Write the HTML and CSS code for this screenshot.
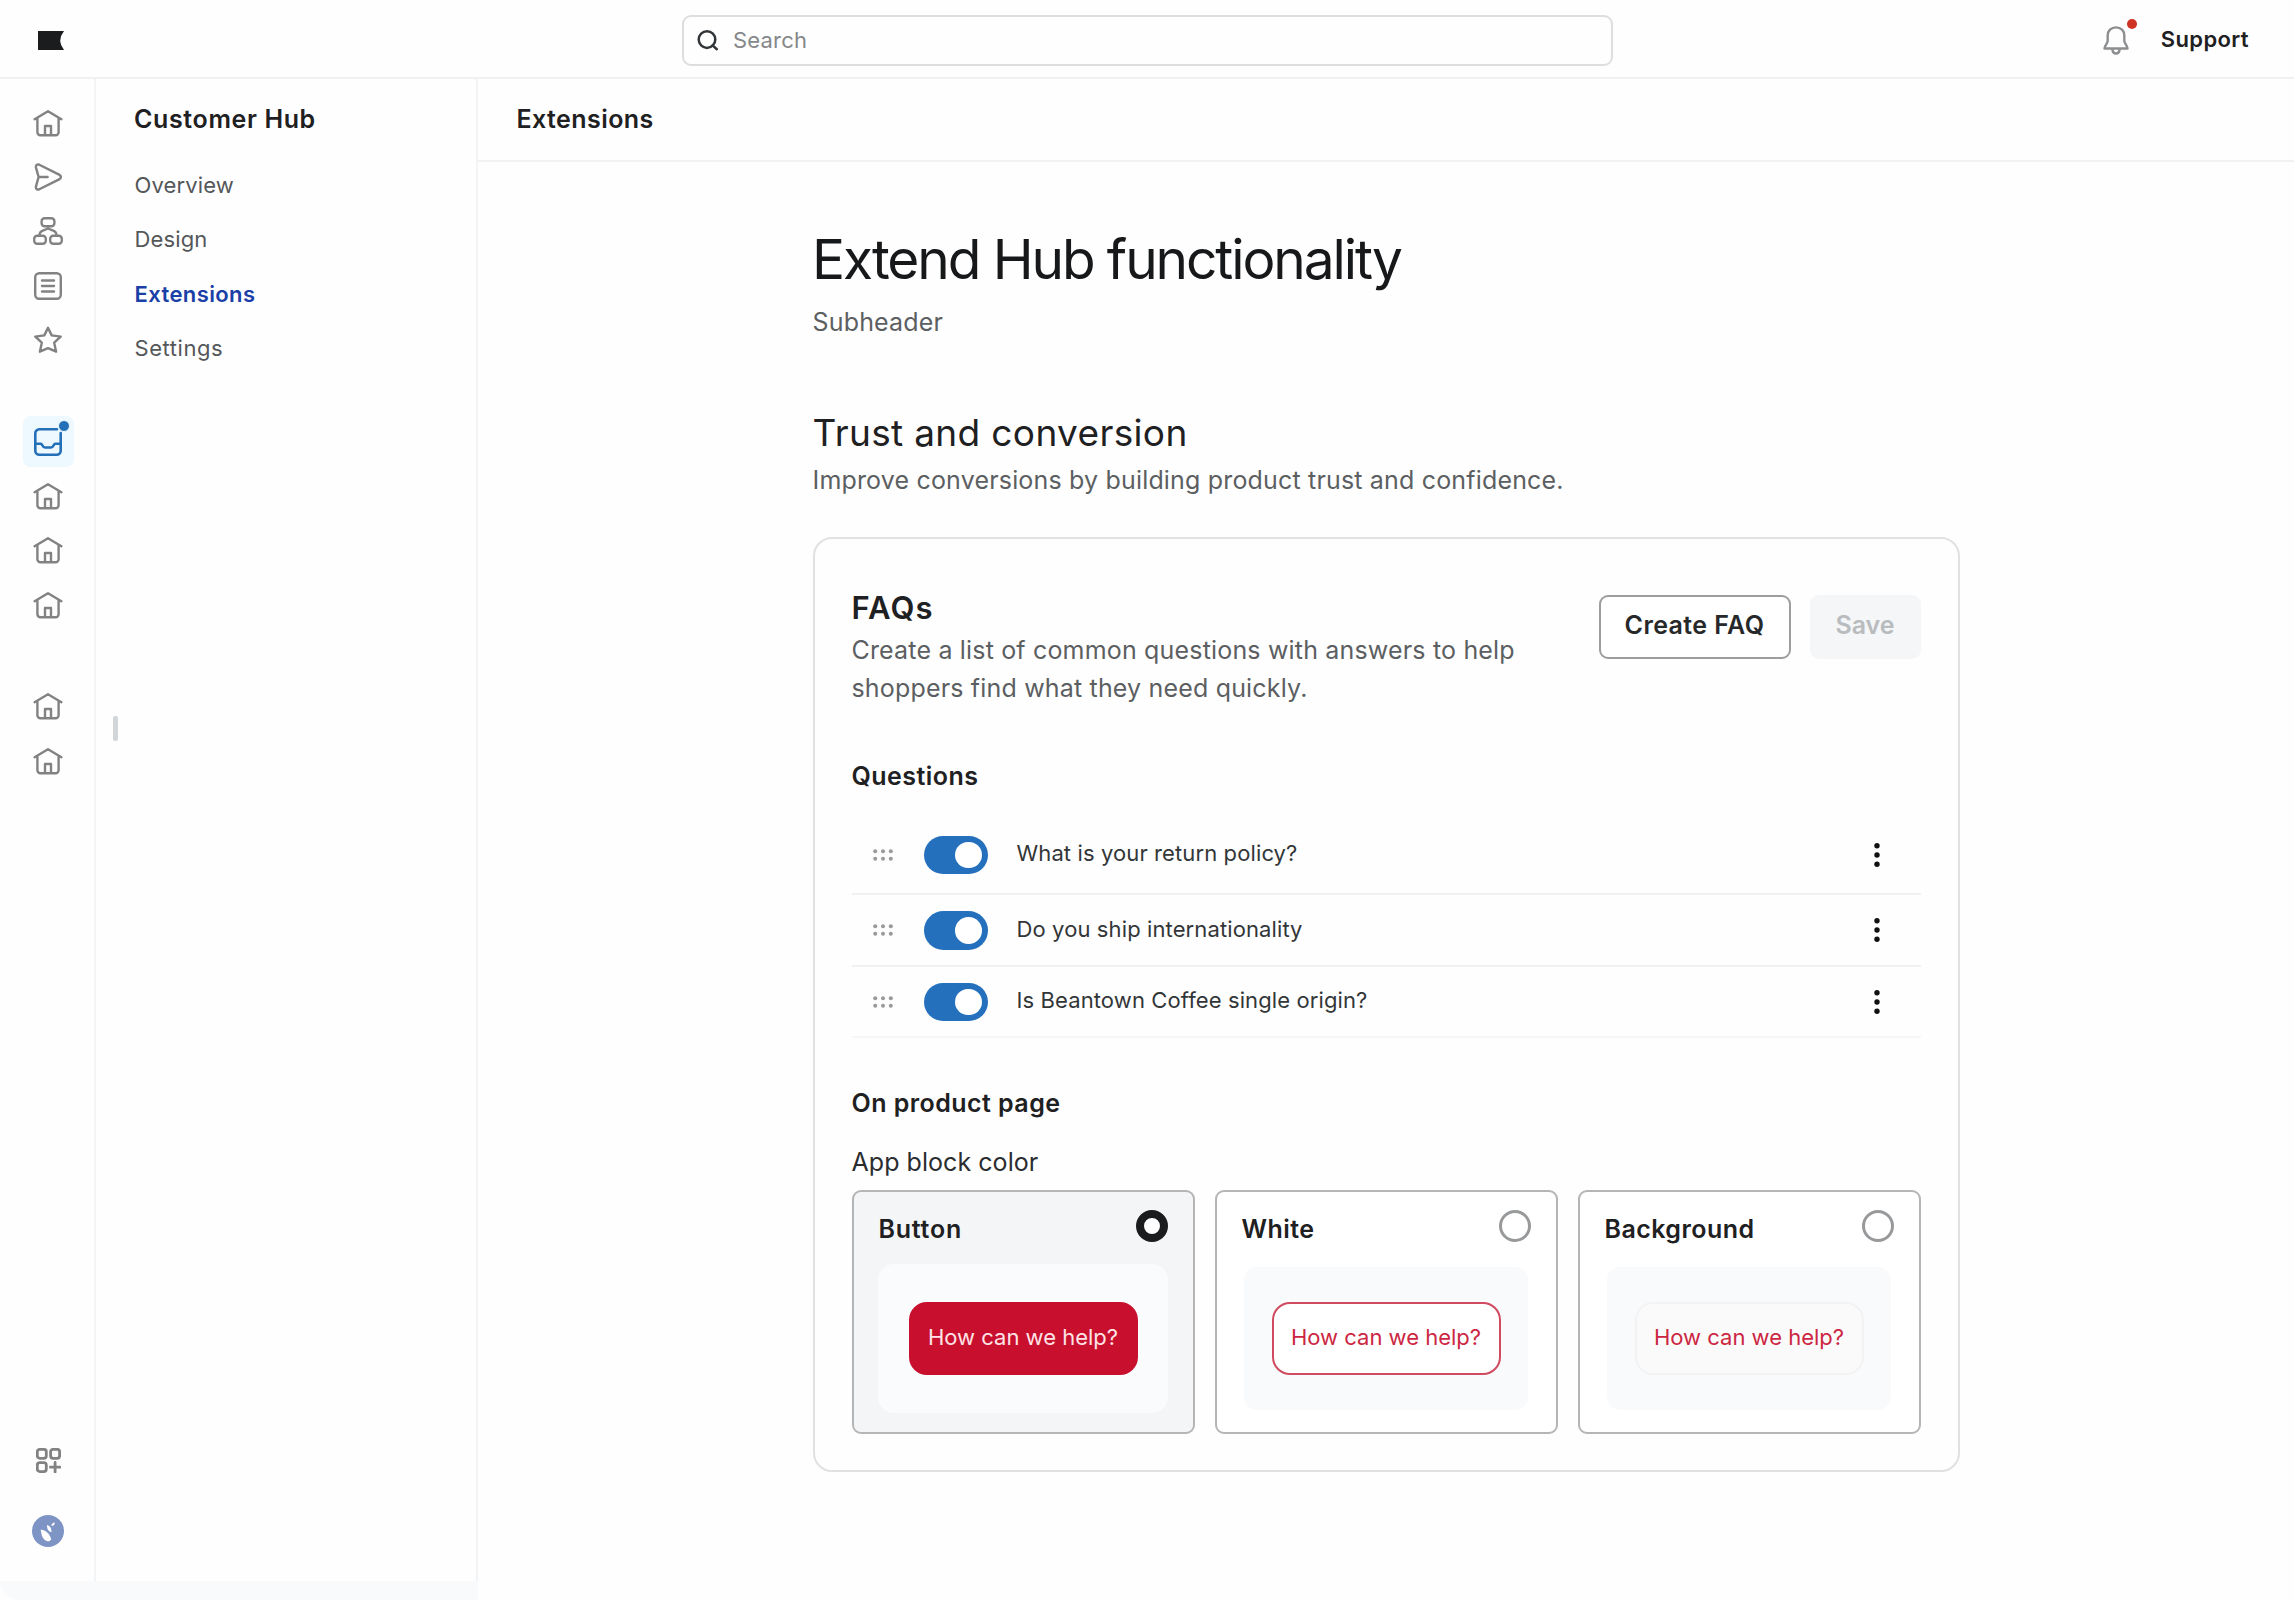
FILE: index.html
```html
<!DOCTYPE html>
<html lang="en">
<head>
<meta charset="utf-8">
<title>Extensions – Customer Hub</title>
<link rel="stylesheet" href="styles.css">
</head>
<body>
<svg class="sprite" aria-hidden="true">
  <symbol id="home" viewBox="0 0 30 28">
    <path d="M1.6 10.2 15 2.2l13.400 8M4.400 9v14.200a3 3 0 0 0 3 3h15.200a3 3 0 0 0 3-3V9M12 26v-9h6v9"/>
  </symbol>
  <symbol id="drag" viewBox="0 0 20 12">
    <circle cx="2.200" cy="2.200" r="2"/><circle cx="10" cy="2.200" r="2"/><circle cx="17.800" cy="2.200" r="2"/>
    <circle cx="2.200" cy="9.800" r="2"/><circle cx="10" cy="9.800" r="2"/><circle cx="17.800" cy="9.800" r="2"/>
  </symbol>
  <symbol id="kebab" viewBox="0 0 6 26">
    <circle cx="3" cy="3.700" r="2.700"/><circle cx="3" cy="13" r="2.700"/><circle cx="3" cy="22.300" r="2.700"/>
  </symbol>
</svg>

<header class="topbar">
  <svg class="logo" viewBox="0 0 26 19"><path d="M0 0h26q-7.500 9.500 0 19H0z"/></svg>
  <div class="search">
    <svg class="search-icon" viewBox="0 0 22 22"><circle cx="10" cy="9.600" r="8.300"/><path d="m15.600 15.400 4.200 3.800"/></svg>
    <span class="search-text">Search</span>
  </div>
  <div class="account">
    <span class="bell">
      <svg viewBox="0 0 26 29"><path d="M13 1.400c-5 0-8.300 3.300-8.300 8v5.400c0 3-3.200 4.200-3.200 7.700h23c0-3.500-3.200-4.700-3.200-7.700V9.400c0-4.700-3.300-8-8.300-8zM9.300 23c.3 2.800 1.600 4.500 3.700 4.500s3.400-1.700 3.700-4.500"/></svg>
      <i class="bell-dot"></i>
    </span>
    <span class="support">Support</span>
  </div>
</header>

<div class="shell">
  <div class="side">
    <div class="side-cols">
      <nav class="rail">
        <a class="rail-item"><svg class="icon home"><use href="#home"/></svg></a>
        <a class="rail-item"><svg class="icon" viewBox="0 0 28 28"><path d="M2 4.600C1.500 2.300 3.200.8 5.300 1.700l19.800 9.900c2.300 1.200 2.300 3.600 0 4.800L5.300 26.300C3.200 27.200 1.500 25.700 2 23.400L4.600 14zM4.600 14h9"/></svg></a>
        <a class="rail-item"><svg class="icon wide" viewBox="0 0 30 28"><rect x="8.600" y="1.200" width="12.800" height="8" rx="3"/><rect x="1.200" y="18.700" width="11.600" height="8" rx="3"/><rect x="17.200" y="18.700" width="11.600" height="8" rx="3"/><path d="M15 9.200v2.300M6.500 18.500c0-4 2-4.500 4-5.200L15 11.500l4.500 1.800c2 .7 4 1.200 4 5.200"/></svg></a>
        <a class="rail-item"><svg class="icon" viewBox="0 0 28 28"><rect x="1.200" y="1.200" width="25.600" height="25.600" rx="4"/><path d="M8 8.500h12M8 14h12M8 19.500h12"/></svg></a>
        <a class="rail-item"><svg class="icon" viewBox="0 0 28 28"><path d="M14 1.800l3.700 7.600 9 1.200-6.500 6.100 1.900 9L14 22.200l-8.100 3.500 1.900-9L1.300 10.600l9-1.200z"/></svg></a>
        <a class="rail-item gap-before"><span class="active-tile">
          <svg class="icon" viewBox="0 0 28 28"><path d="M23 1.300H5.300a4 4 0 0 0-4 4v17.400a4 4 0 0 0 4 4h17.400a4 4 0 0 0 4-4V5M1.300 15.800h5.500c1.600 0 1.700 3.700 4.200 3.700h6c2.500 0 2.600-3.700 4.200-3.700h5.500"/></svg>
          <i class="tile-dot"></i>
        </span></a>
        <a class="rail-item"><svg class="icon home"><use href="#home"/></svg></a>
        <a class="rail-item"><svg class="icon home"><use href="#home"/></svg></a>
        <a class="rail-item"><svg class="icon home"><use href="#home"/></svg></a>
        <a class="rail-item gap-before"><svg class="icon home"><use href="#home"/></svg></a>
        <a class="rail-item"><svg class="icon home"><use href="#home"/></svg></a>
        <div class="rail-foot">
          <svg class="icon apps" viewBox="0 0 25 25"><rect x="1.300" y="1.300" width="9" height="9" rx="2.500"/><rect x="14.600" y="1.300" width="9" height="9" rx="2.500"/><rect x="1.300" y="14.600" width="9" height="9" rx="2.500"/><path d="M19.100 14.500v9.500M14.400 19.200h9.500"/></svg>
          <svg class="avatar" viewBox="0 0 32 32"><circle class="disc" cx="16" cy="16" r="16"/><path d="M8.600 14.800c3.800-.5 9.400 3.600 10.600 9.600-3.200 4.200-7.600.6-9.300-3.600zM15 10c2.800.5 4.800 3.200 4.500 7.200-3.200-.6-4.700-3.400-4.500-7.200zM19.500 11c-.2-2.200 1.200-3.500 3.200-3.600.1 2.200-1.200 3.600-3.200 3.600z"/></svg>
        </div>
      </nav>
      <nav class="subnav">
        <h2 class="subnav-title">Customer Hub</h2>
        <div class="subnav-links">
          <a class="subnav-link">Overview</a>
          <a class="subnav-link">Design</a>
          <a class="subnav-link current">Extensions</a>
          <a class="subnav-link settings">Settings</a>
        </div>
        <i class="resize-handle"></i>
      </nav>
    </div>
    <div class="side-foot"></div>
  </div>

  <main class="main">
    <div class="page-bar">Extensions</div>
    <div class="content">
      <h1>Extend Hub functionality</h1>
      <p class="body subheader">Subheader</p>
      <h2 class="section-title">Trust and conversion</h2>
      <p class="body">Improve conversions by building product trust and confidence.</p>

      <section class="card">
        <div class="card-head">
          <div>
            <h3 class="card-title">FAQs</h3>
            <p class="body">Create a list of common questions with answers to help<br>shoppers find what they need quickly.</p>
          </div>
          <div class="actions">
            <button class="btn">Create FAQ</button>
            <button class="btn disabled">Save</button>
          </div>
        </div>

        <h4 class="label">Questions</h4>
        <ul class="questions">
          <li class="question"><svg class="drag"><use href="#drag"/></svg><span class="toggle"><i></i></span><span class="q-text">What is your return policy?</span><svg class="kebab"><use href="#kebab"/></svg></li>
          <li class="question"><svg class="drag"><use href="#drag"/></svg><span class="toggle"><i></i></span><span class="q-text">Do you ship internationality</span><svg class="kebab"><use href="#kebab"/></svg></li>
          <li class="question"><svg class="drag"><use href="#drag"/></svg><span class="toggle"><i></i></span><span class="q-text">Is Beantown Coffee single origin?</span><svg class="kebab"><use href="#kebab"/></svg></li>
        </ul>

        <h4 class="label product">On product page</h4>
        <p class="field-label">App block color</p>
        <div class="options">
          <div class="option selected">
            <div class="option-head"><span>Button</span><i class="radio"></i></div>
            <div class="preview"><span class="help solid">How can we help?</span></div>
          </div>
          <div class="option">
            <div class="option-head"><span>White</span><i class="radio"></i></div>
            <div class="preview"><span class="help outline">How can we help?</span></div>
          </div>
          <div class="option">
            <div class="option-head"><span>Background</span><i class="radio"></i></div>
            <div class="preview"><span class="help soft">How can we help?</span></div>
          </div>
        </div>
      </section>
    </div>
  </main>
</div>
</body>
</html>
```
FILE: styles.css
```css
* { box-sizing: border-box; }

body {
  margin: 0;
  height: 1600px;
  display: flex;
  flex-direction: column;
  background: #fefefe;
  color: #1e2022;
  font-family: Inter, "Liberation Sans", sans-serif;
  font-size: 22px;
  overflow: hidden;
}

h1, h2, h3, h4, p, ul { margin: 0; padding: 0; font-weight: 400; }
svg, i { display: block; flex: none; }
.sprite { position: absolute; width: 0; height: 0; }

/* Top bar */
.topbar {
  height: 79px;
  flex: none;
  padding: 4px 45px 0 38px;
  border-bottom: 2px solid #f0f2f2;
  display: grid;
  grid-template-columns: 644px 931px 1fr;
  align-items: center;
}
.logo { width: 26px; height: 19px; fill: #1a1c1e; }
.search {
  height: 51px;
  padding: 0 13px;
  border: 2px solid #dcdedf;
  border-radius: 9px;
  display: flex;
  align-items: center;
  gap: 14px;
  color: #85878a;
  letter-spacing: 0.009em;
}
.search-text { padding-bottom: 2px; }
.search-icon { width: 22px; height: 22px; fill: none; stroke: #333638; stroke-width: 2.5; stroke-linecap: round; }
.account { display: flex; align-items: center; justify-content: flex-end; gap: 32px; }
.bell { position: relative; }
.bell svg { width: 26px; height: 29px; fill: none; stroke: #8c8e90; stroke-width: 2.4; stroke-linejoin: round; }
.bell-dot { position: absolute; left: 24px; top: -7px; width: 10px; height: 10px; border-radius: 50%; background: #cf3324; }
.support { font-weight: 600; letter-spacing: 0.017em; padding-bottom: 4px; }

/* Side navigation */
.shell { flex: 1; display: flex; min-height: 0; }
.side { width: 478px; flex: none; display: flex; flex-direction: column; }
.side-cols { flex: 1; display: flex; min-height: 0; }
.side-foot { height: 19px; background: #f9fafb; border-bottom-left-radius: 19px; }
.rail {
  width: 96px;
  padding-top: 16.5px;
  border-right: 2px solid #f3f4f5;
  display: flex;
  flex-direction: column;
}
.rail-item { height: 54.3px; flex: none; display: flex; align-items: center; justify-content: center; padding-left: 2px; }
.gap-before { margin-top: 47.5px; }
.icon { width: 28px; height: 28px; fill: none; stroke: #828282; stroke-width: 2.4; stroke-linecap: round; stroke-linejoin: round; }
.icon.home { width: 30px; }
.icon.wide { width: 30px; }
.icon.apps { width: 25px; height: 25px; stroke-width: 2.8; }
.active-tile {
  position: relative;
  width: 51px;
  height: 51px;
  border-radius: 8px;
  background: #edf9ff;
  display: flex;
  align-items: center;
  justify-content: center;
}
.active-tile .icon { stroke: #2470b8; stroke-width: 2.6; }
.tile-dot { position: absolute; right: 3.5px; top: 4px; width: 12px; height: 12px; border: 1px solid #edf9ff; border-radius: 50%; background: #2470b8; }
.rail-foot { margin-top: auto; padding: 0 0 34px 2px; display: flex; flex-direction: column; align-items: center; gap: 42px; }
.avatar { width: 32px; height: 32px; fill: #fff; }
.avatar .disc { fill: #7d94c4; }

.subnav { position: relative; flex: 1; padding-left: 38px; border-right: 2px solid #f3f4f5; }
.subnav-title, .page-bar { font-size: 25px; font-weight: 600; line-height: 80px; letter-spacing: 0.017em; }
.subnav-title { letter-spacing: 0.025em; }
.subnav-links { display: grid; grid-auto-rows: 54.3px; margin-top: -1px; }
.subnav-link { padding-left: 0.5px; line-height: 54.4px; color: #54575a; letter-spacing: 0.006em; }
.subnav-link.current { color: #1a40a8; font-weight: 600; letter-spacing: 0.018em; }
.subnav-link.settings { letter-spacing: 0.026em; }
.resize-handle { position: absolute; left: 17px; top: 636.5px; width: 4.5px; height: 25px; border-radius: 2px; background: #d3d6d9; }

/* Main column */
.main { flex: 1; }
.page-bar { height: 83px; padding-left: 38.5px; border-bottom: 2px solid #f1f2f3; }
.content { width: 1147px; margin: 0 auto; padding-top: 65px; }
h1 { margin-left: -0.5px; font-size: 55px; line-height: 65px; letter-spacing: -0.038em; color: #16181a; }
.body { font-size: 25px; line-height: 38px; letter-spacing: 0.007em; color: #5c5f62; }
.subheader { margin-top: 11px; }
.section-title { margin: 67.5px 0 4.3px; font-size: 37px; line-height: 48px; letter-spacing: 0.0095em; }

.card { height: 935px; margin-top: 38.5px; padding: 50px 37px 0; border: 2px solid #dfe1e2; border-radius: 19px; }
.card-head { display: flex; justify-content: space-between; align-items: flex-start; }
.card-title { font-size: 31px; font-weight: 600; line-height: 38px; letter-spacing: 0.035em; margin-bottom: 4px; }
.actions { display: flex; gap: 19px; margin-top: 5.5px; }
.btn {
  height: 64px;
  width: 192px;
  padding: 0 0 2px;
  border: 2px solid #9b9d9f;
  border-radius: 9px;
  background: #fff;
  color: #26282a;
  font: 600 25px/1 Inter, "Liberation Sans", sans-serif;
  letter-spacing: 0.016em;
}
.btn.disabled { width: 111px; border-color: #f4f6f8; background: #f4f6f8; color: #b9bcbe; letter-spacing: 0; }

.label { font-size: 25px; font-weight: 600; line-height: 38px; letter-spacing: 0.018em; margin-top: 50px; }
.questions { list-style: none; margin-top: 21px; }
.question { height: 72px; padding: 0 41px 0 21.5px; border-bottom: 2px solid #f0f1f2; display: flex; align-items: center; }
.question:first-child { height: 79px; }
.question:last-child { height: 71px; border-color: #f5f6f7; }
.drag { width: 20px; height: 12px; fill: #97999c; }
.toggle { width: 64px; height: 38.5px; margin: 0 29px 0 30.5px; padding: 6px; border-radius: 20px; background: #2470bd; display: flex; justify-content: flex-end; }
.toggle i { width: 26.5px; height: 26.5px; border-radius: 50%; background: #fff; }
.q-text { flex: 1; padding-bottom: 3px; color: #333638; letter-spacing: 0.005em; }
.kebab { width: 6px; height: 26px; fill: #111; }

.product { margin-top: 46px; }
.field-label { margin: 21px 0 9px; font-size: 25px; line-height: 38px; letter-spacing: 0.002em; color: #2b2d30; }
.options { display: grid; grid-template-columns: repeat(3, 1fr); gap: 20px; }
.option { height: 244px; padding: 18px 24.5px 0; border: 2px solid #b3b5b7; border-radius: 9px; background: #fff; }
.option.selected { background: #f4f5f7; }
.option-head { display: flex; justify-content: space-between; height: 32px; padding-left: 0.5px; font-size: 25px; font-weight: 600; line-height: 39px; letter-spacing: 0.018em; }
.selected .option-head { letter-spacing: 0.03em; }
.radio { width: 32px; height: 32px; border: 3px solid #97999b; border-radius: 50%; background: #fff; }
.selected .radio { border: 8px solid #1a1c1e; }
.preview {
  height: 149px;
  margin-top: 22px;
  border: 3px solid #fff;
  border-radius: 16px;
  background: #f9fafc;
  display: flex;
  align-items: center;
  justify-content: center;
}
.selected .preview { border-color: #fafbfd; background: #fafbfd; }
.help {
  width: 229px;
  height: 73px;
  padding-bottom: 4px;
  border: 2px solid;
  border-radius: 18px;
  display: flex;
  align-items: center;
  justify-content: center;
}
.solid { background: #c8102e; border-color: #c8102e; color: #ffe3e6; }
.outline { background: #fff; border-color: #d04a60; color: #cc2642; }
.soft { background: #fafafa; border-color: #f3f3f4; color: #cc2642; }
```
